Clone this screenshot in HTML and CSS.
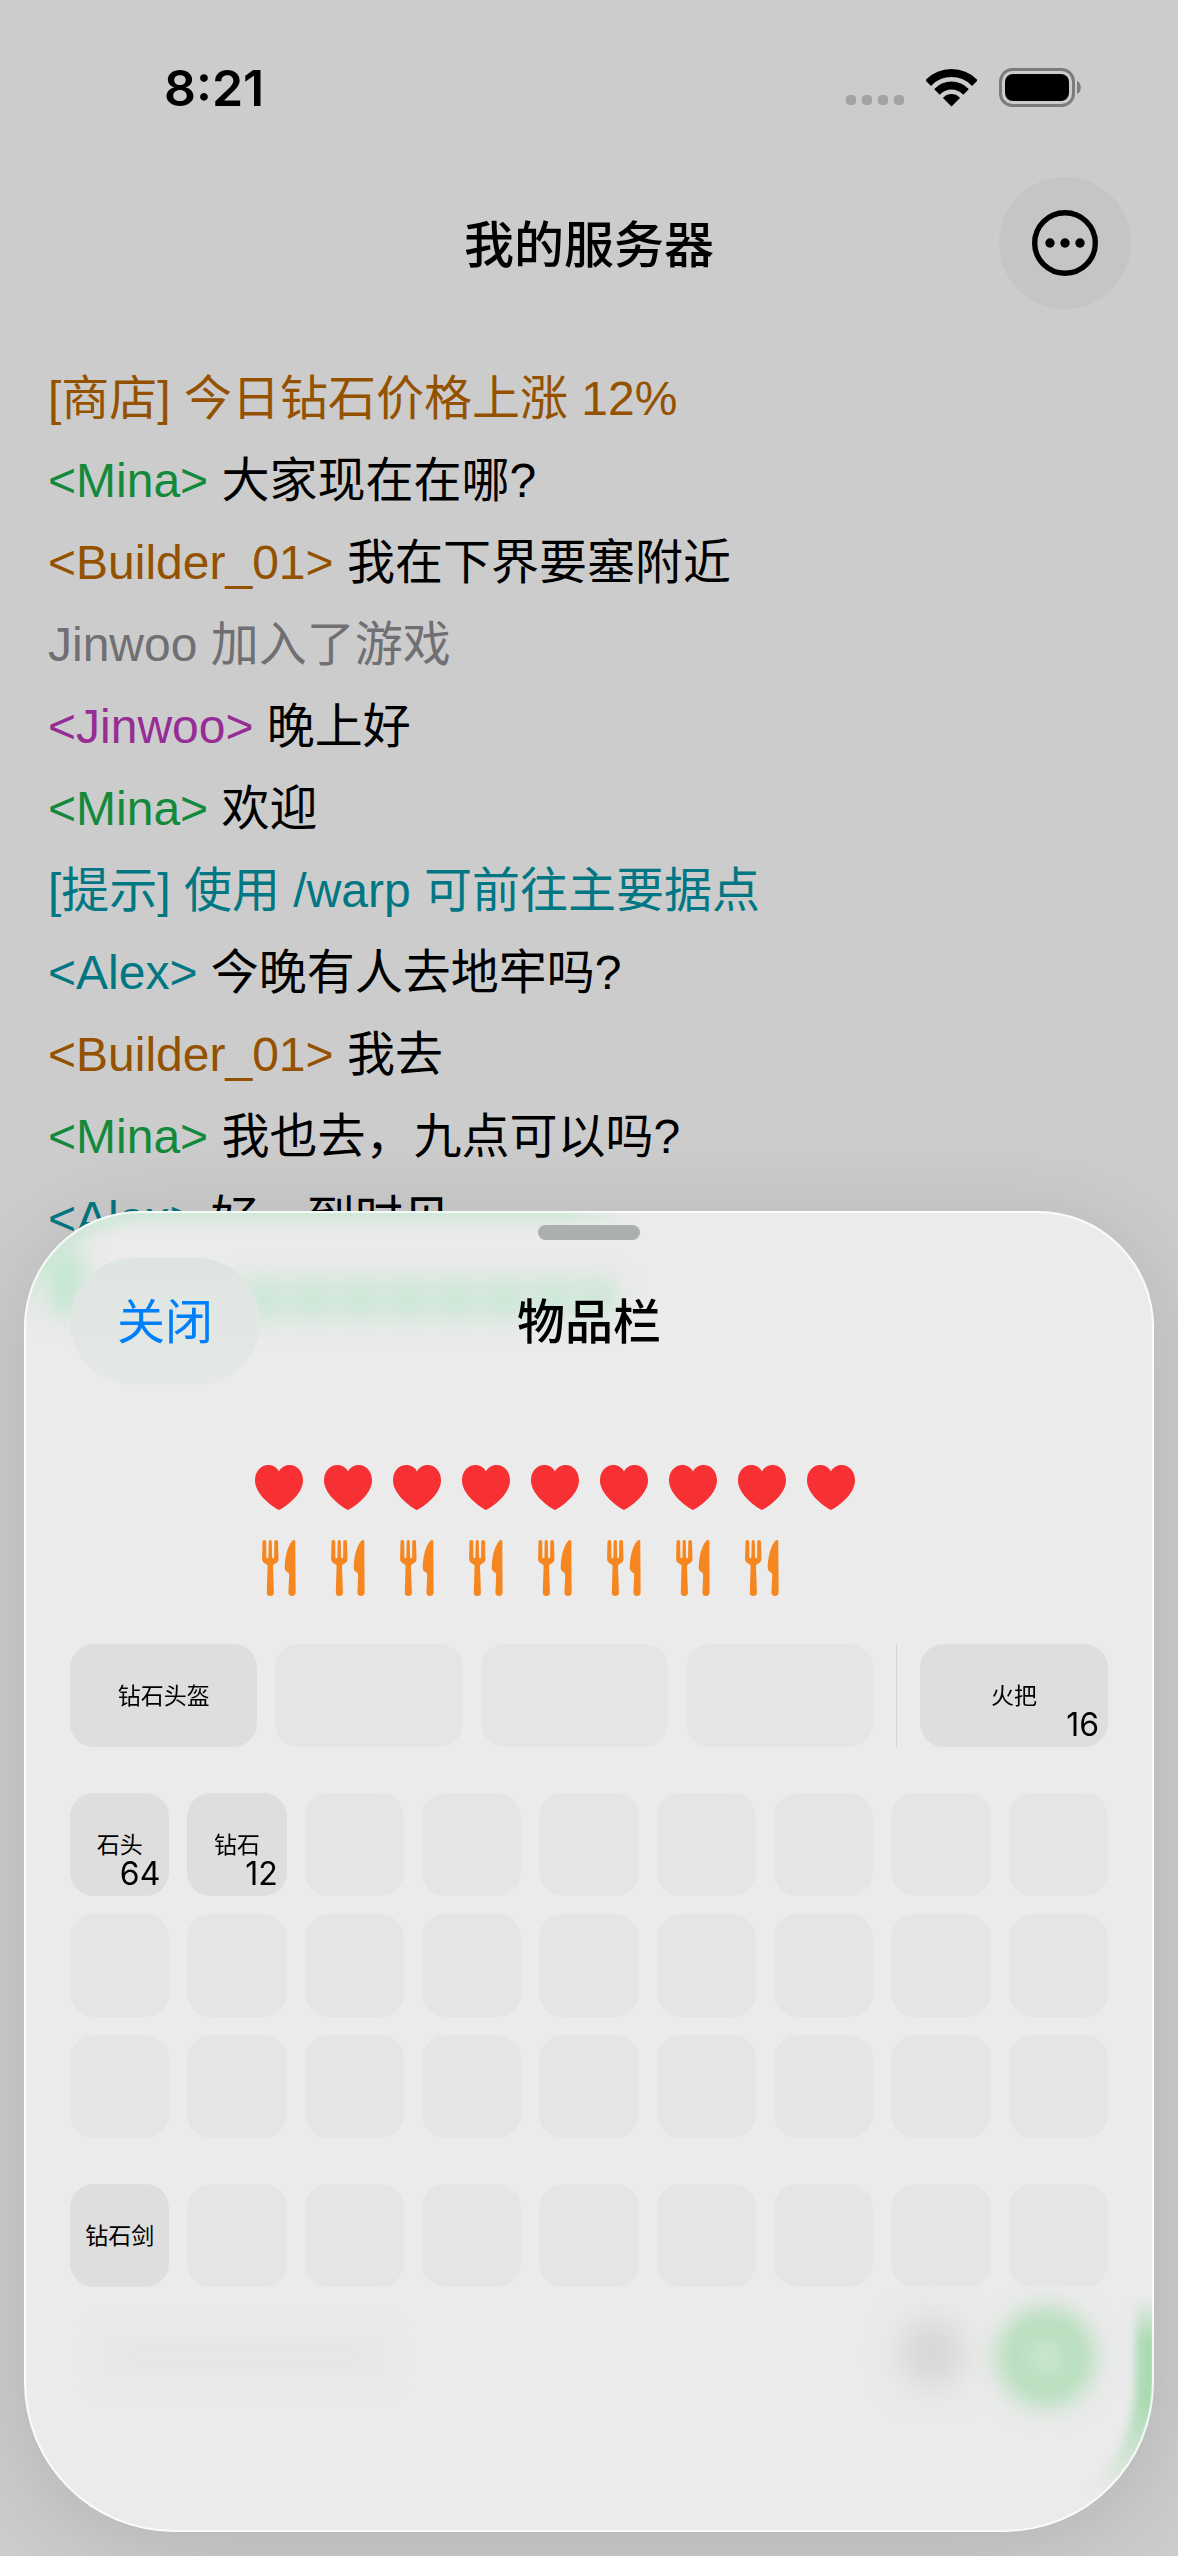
FILE: index.html
```html
<!DOCTYPE html>
<html lang="zh-CN">
<head>
<meta charset="utf-8">
<meta name="viewport" content="width=device-width, initial-scale=1">
<title>我的服务器</title>
<link rel="stylesheet" href="styles.css">
</head>
<body>
<svg class="defs" aria-hidden="true">
  <symbol id="heart" viewBox="0 0 48 45">
    <path d="M24 45C22.500 45 0 31 0 15.500C0 6 6 0 13.500 0C18 0 22 2.500 24 6.500C26 2.500 30 0 34.500 0C42 0 48 6 48 15.500C48 31 25.500 45 24 45Z"/>
  </symbol>
  <symbol id="food" viewBox="0 0 34 56">
    <path d="M2.300 0C3.500 0 4.200.8 4.200 2L4.400 17.300C4.400 18.500 6.300 18.500 6.400 17.300L6.700 2C6.700-.6 9.800-.6 9.800 2L10.100 17.300C10.200 18.500 12.100 18.500 12.100 17.300L12.300 2C12.300.8 13 0 14.200 0C15.300 0 16 .8 16 2L16.500 18.500C16.600 22 14.500 23 12.500 24C11.500 24.600 11 25.200 11 26.500L11.900 52.500C12 54.800 10.500 56 8.300 56C6.100 56 4.700 54.800 4.800 52.500L5.600 26.500C5.600 25.200 5.100 24.600 4.100 24C2.100 23 0 22 .1 18.500L.5 2C.5.800 1.200 0 2.300 0Z"/>
    <path d="M32 0C32.800 0 33.300.6 33.300 1.500L33.600 52.500C33.600 54.800 32.200 56 30 56C27.800 56 26.400 54.800 26.400 52.500L27.200 35C27.200 33.600 26.700 33 25.500 32.300C23.500 31 22.600 29.800 22.700 27.500C23 17 25.500 6 30.300.8C30.900.2 31.400 0 32 0Z"/>
  </symbol>
</svg>

<div class="screen">
  <div class="status">
    <time class="clock">8:21</time>
    <div class="indicators">
      <svg width="58" height="12" viewBox="0 0 58 12" fill="#a3a3a3" aria-hidden="true"><rect width="10" height="10" rx="4"/><rect x="16" width="10" height="10" rx="4"/><rect x="32" width="10" height="10" rx="4"/><rect x="48" width="10" height="10" rx="4"/></svg>
      <svg class="wifi" width="51" height="38" viewBox="0 0 51 38" aria-label="Wi-Fi">
        <clipPath id="fan"><path d="M25.500 37.500L-12 0V-10H63V0Z"/></clipPath>
        <g clip-path="url(#fan)"><circle cx="25.500" cy="36" r="32" fill="none" stroke="#000" stroke-width="8"/><circle cx="25.500" cy="36" r="19.500" fill="none" stroke="#000" stroke-width="8"/><circle cx="25.500" cy="36" r="11"/></g>
      </svg>
      <svg width="83" height="39" viewBox="0 0 83 39" aria-label="电池"><rect x="1.500" y="1.500" width="73" height="36" rx="12" fill="none" stroke="#7b7b7b" stroke-width="3"/><rect x="6" y="6" width="64" height="27" rx="8"/><path d="M78 13C83 15 83 24 78 26Z" fill="#7b7b7b"/></svg>
    </div>
  </div>

  <header class="bar">
    <h1>我的服务器</h1>
    <button class="more" type="button" aria-label="更多">
      <svg width="66" height="66" viewBox="0 0 66 66" aria-hidden="true"><circle cx="33" cy="33" r="30.300" fill="none" stroke="#000" stroke-width="5.400"/><circle cx="18" cy="33" r="4.700"/><circle cx="33" cy="33" r="4.700"/><circle cx="48" cy="33" r="4.700"/></svg>
    </button>
  </header>

  <ul class="chat">
    <li class="amber">[商店] 今日钻石价格上涨 12%</li>
    <li><span class="green">&lt;Mina&gt;</span> 大家现在在哪?</li>
    <li><span class="amber">&lt;Builder_01&gt;</span> 我在下界要塞附近</li>
    <li class="muted">Jinwoo 加入了游戏</li>
    <li><span class="purple">&lt;Jinwoo&gt;</span> 晚上好</li>
    <li><span class="green">&lt;Mina&gt;</span> 欢迎</li>
    <li class="teal">[提示] 使用 /warp 可前往主要据点</li>
    <li><span class="teal">&lt;Alex&gt;</span> 今晚有人去地牢吗?</li>
    <li><span class="amber">&lt;Builder_01&gt;</span> 我去</li>
    <li><span class="green">&lt;Mina&gt;</span> 我也去，九点可以吗?</li>
    <li><span class="teal">&lt;Alex&gt;</span> 好，到时见</li>
  </ul>
</div>

<section class="sheet" role="dialog" aria-labelledby="sheet-title">
  <div class="glass" aria-hidden="true">
    <i class="rim rim-top"></i><i class="glow glow-corner"></i><i class="glow glow-line"></i>
    <i class="glow glow-field"></i><i class="glow glow-dot"></i><i class="glow glow-send"></i><i class="rim rim-right"></i>
  </div>
  <div class="grabber"></div>
  <header class="sheet-bar">
    <button class="close" type="button">关闭</button>
    <h2 id="sheet-title">物品栏</h2>
  </header>

  <div class="stats">
    <div class="meter hearts" role="img" aria-label="生命值 9/10">
      <svg><use href="#heart"/></svg><svg><use href="#heart"/></svg><svg><use href="#heart"/></svg><svg><use href="#heart"/></svg><svg><use href="#heart"/></svg><svg><use href="#heart"/></svg><svg><use href="#heart"/></svg><svg><use href="#heart"/></svg><svg><use href="#heart"/></svg>
    </div>
    <div class="meter food" role="img" aria-label="饥饿值 8/10">
      <svg><use href="#food"/></svg><svg><use href="#food"/></svg><svg><use href="#food"/></svg><svg><use href="#food"/></svg><svg><use href="#food"/></svg><svg><use href="#food"/></svg><svg><use href="#food"/></svg><svg><use href="#food"/></svg>
    </div>
  </div>

  <div class="inventory">
    <div class="gear">
      <div class="armor">
        <div class="slot full">钻石头盔</div><div class="slot"></div><div class="slot"></div><div class="slot"></div>
      </div>
      <div class="slot full">火把<span class="count">16</span></div>
    </div>
    <div class="grid">
      <div class="slot full">石头<span class="count">64</span></div><div class="slot full">钻石<span class="count">12</span></div><div class="slot"></div><div class="slot"></div><div class="slot"></div><div class="slot"></div><div class="slot"></div><div class="slot"></div><div class="slot"></div>
      <div class="slot"></div><div class="slot"></div><div class="slot"></div><div class="slot"></div><div class="slot"></div><div class="slot"></div><div class="slot"></div><div class="slot"></div><div class="slot"></div>
      <div class="slot"></div><div class="slot"></div><div class="slot"></div><div class="slot"></div><div class="slot"></div><div class="slot"></div><div class="slot"></div><div class="slot"></div><div class="slot"></div>
    </div>
    <div class="grid">
      <div class="slot full">钻石剑</div><div class="slot"></div><div class="slot"></div><div class="slot"></div><div class="slot"></div><div class="slot"></div><div class="slot"></div><div class="slot"></div><div class="slot"></div>
    </div>
  </div>
</section>
</body>
</html>
```
FILE: styles.css
```css
* { box-sizing: border-box; }

body {
  margin: 0;
  min-height: 100vh;
  background: #ccc;
  color: #000;
  font-family: Inter, "Noto Sans CJK SC", sans-serif;
  overflow: hidden;
}

h1, h2, ul { margin: 0; padding: 0; }

button {
  border: 0;
  padding: 0;
  font: inherit;
  cursor: pointer;
}

svg { display: block; }
.defs { position: absolute; width: 0; height: 0; }

/* Status bar */
.status {
  display: flex;
  justify-content: space-between;
  align-items: center;
  height: 177px;
  padding: 0 96px 2px 164px;
}

.clock {
  font-size: 50px;
  font-weight: 600;
  line-height: 60px;
}

.indicators {
  display: flex;
  align-items: flex-end;
  gap: 22px;
}

/* Navigation bar */
.bar {
  display: grid;
  grid-template-columns: 132px 1fr 132px;
  align-items: center;
  padding: 0 47px;
}

.bar h1 {
  grid-column: 2;
  padding-top: 4px;
  text-align: center;
  font-size: 50px;
  font-weight: 500;
  line-height: 72px;
}

.more {
  display: grid;
  place-items: center;
  width: 132px;
  height: 132px;
  border-radius: 50%;
  background: #c5c5c5;
}

/* Chat log */
.chat {
  list-style: none;
  padding: 49px 48px 0;
  font-family: "Liberation Sans", "Noto Sans CJK SC", sans-serif;
  font-size: 48px;
  line-height: 82px;
  white-space: nowrap;
}

.amber { color: #945200; }
.green { color: #128a3c; }
.purple { color: #962d96; }
.teal { color: #007783; }
.muted { color: #707074; }

/* Inventory sheet */
.sheet {
  position: fixed;
  inset: auto 24px 24px;
  padding: 14px 46px 245px;
  border-radius: 116px 116px 150px 150px;
  background: #ebebeb;
  box-shadow: 0 12px 90px rgba(0, 0, 0, .12);
}

.glass {
  position: absolute;
  inset: 0;
  border-radius: inherit;
  overflow: hidden;
}

.glass::after {
  content: "";
  position: absolute;
  inset: 0;
  border-radius: inherit;
  box-shadow: inset 0 0 1px 2px rgba(255, 255, 255, .85);
}

/* Colour picked up along the curved edge */
.rim {
  position: absolute;
  inset: 0;
  border-radius: inherit;
}

.rim-top {
  box-shadow: inset 4px 14px 16px -4px #cde7d6;
  mask: linear-gradient(to right, #000 540px, transparent 610px), linear-gradient(#000 60px, transparent 120px);
  mask-composite: intersect;
}

.rim-right {
  box-shadow: inset -20px 0 10px -2px #a9dbb2;
  mask: linear-gradient(to top, transparent 40px, #000 130px, #000 190px, transparent 236px);
}

/* Soft shapes of the content behind the glass */
.glow { position: absolute; filter: blur(12px); }
.glow-corner { left: 24px; top: 36px; width: 36px; height: 70px; border-radius: 20px; background: #c2e6d0; }
.glow-line {
  left: 210px;
  top: 66px;
  width: 384px;
  height: 42px;
  border-radius: 20px;
  background: repeating-linear-gradient(to right, #d8e9de 0 10px, #c8e6d4 22px 42px, #d8e9de 48px);
}
.glow-field { left: 80px; bottom: 156px; width: 280px; height: 40px; background: #e6e6e6; }
.glow-dot { right: 190px; bottom: 144px; width: 64px; height: 70px; border-radius: 50%; background: #d6d6d6; filter: blur(16px); }
.glow-send { right: 60px; bottom: 126px; width: 96px; height: 98px; border-radius: 50%; background: radial-gradient(#dcebde, #afdcb5 50%); }

.sheet > :not(.glass) { position: relative; }

.grabber {
  width: 102px;
  height: 15px;
  margin: 0 auto;
  border-radius: 8px;
  background: #aab0ae;
}

.sheet-bar {
  display: grid;
  grid-template-columns: 190px 1fr 190px;
  align-items: center;
  margin-top: 18px;
  font-size: 48px;
  line-height: 72px;
}

.close {
  height: 127px;
  border-radius: 64px;
  background: linear-gradient(#dee5e1, #e5e8e6);
  color: #007ffb;
}

.sheet-bar h2 {
  text-align: center;
  font-size: inherit;
  font-weight: 500;
}

.stats {
  display: grid;
  justify-content: center;
  gap: 25px;
  padding-top: 74px;
}

.meter {
  display: grid;
  grid-template-columns: repeat(10, 48px);
  gap: 21px;
  height: 56px;
  place-items: center;
}

.hearts { fill: #f63033; }
.hearts svg { width: 48px; height: 45px; }
.food { fill: #f6861f; }
.food svg { width: 34px; height: 56px; }

.inventory {
  display: grid;
  gap: 46px;
  padding-top: 48px;
}

.gear {
  display: grid;
  grid-template-columns: 1fr 188px;
  gap: 23px;
}

.armor {
  display: grid;
  grid-template-columns: repeat(4, 1fr);
  gap: 18px;
  padding-right: 23px;
  border-right: 1px solid #d4d4d4;
}

.grid {
  display: grid;
  grid-template-columns: repeat(9, 1fr);
  gap: 18px;
}

.slot {
  position: relative;
  display: grid;
  place-items: center;
  height: 103px;
  border-radius: 24px;
  background: #e5e5e5;
  font-size: 23px;
  line-height: 32px;
  white-space: nowrap;
}

.slot.full { background: #dedede; }

.count {
  position: absolute;
  right: 9px;
  bottom: 6px;
  font-size: 32px;
}
```
